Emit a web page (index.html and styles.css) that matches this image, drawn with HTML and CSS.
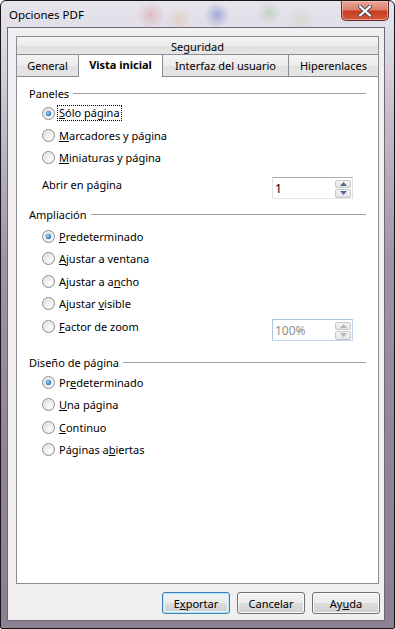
FILE: index.html
```html
<!DOCTYPE html>
<html lang="es">
<head>
    <meta charset="UTF-8">
    <title>Opciones PDF</title>
    <link rel="stylesheet" href="styles.css">
</head>
<body>
    <div class="window">
        <div class="titlebar">
            <span class="title">Opciones PDF</span>
            <div class="close-btn">
                <svg width="18" height="12" viewBox="0 0 18 12">
                    <path d="M4 1.5 L14 10.5 M14 1.5 L4 10.5" stroke="#4a4a55" stroke-width="4" stroke-linecap="round"/>
                    <path d="M4 1.5 L14 10.5 M14 1.5 L4 10.5" stroke="#ffffff" stroke-width="2.2" stroke-linecap="round"/>
                </svg>
            </div>
        </div>

        <div class="client">
            <div class="tabs">
                <div class="tab-row row-top">
                    <div class="tab tab-wide">Seguridad</div>
                </div>
                <div class="tab-row row-bottom">
                    <div class="tab tab-general">General</div>
                    <div class="tab tab-active">Vista inicial</div>
                    <div class="tab tab-interfaz">Interfaz del usuario</div>
                    <div class="tab tab-hiper">Hiperenlaces</div>
                </div>

                <div class="panel">
                    <!-- Paneles -->
                    <div class="group-title"><span>Paneles</span></div>
                    <div class="radio-row">
                        <span class="radio on"><span class="dot"></span></span>
                        <span class="label focus"><u>S</u>ólo página</span>
                    </div>
                    <div class="radio-row">
                        <span class="radio"></span>
                        <span class="label"><u>M</u>arcadores y página</span>
                    </div>
                    <div class="radio-row">
                        <span class="radio"></span>
                        <span class="label"><u>M</u>iniaturas y página</span>
                    </div>
                    <div class="spin-row">
                        <span class="spin-label">Abrir en página</span>
                        <div class="spinbox">
                            <span class="spin-value">1</span>
                            <div class="spin-buttons">
                                <span class="spin-btn"><svg width="7" height="4" viewBox="0 0 7 4"><path d="M0 4 L3.5 0 L7 4 Z" fill="#56689a"/></svg></span>
                                <span class="spin-btn"><svg width="7" height="4" viewBox="0 0 7 4"><path d="M0 0 L3.5 4 L7 0 Z" fill="#56689a"/></svg></span>
                            </div>
                        </div>
                    </div>

                    <!-- Ampliación -->
                    <div class="group-title gt-zoom"><span>Ampliación</span></div>
                    <div class="radio-list">
                        <div class="radio-row">
                            <span class="radio on"><span class="dot"></span></span>
                            <span class="label"><u>P</u>redeterminado</span>
                        </div>
                        <div class="radio-row">
                            <span class="radio"></span>
                            <span class="label"><u>A</u>justar a ventana</span>
                        </div>
                        <div class="radio-row">
                            <span class="radio"></span>
                            <span class="label">Ajustar a a<u>n</u>cho</span>
                        </div>
                        <div class="radio-row">
                            <span class="radio"></span>
                            <span class="label">Ajustar <u>v</u>isible</span>
                        </div>
                        <div class="factor-row">
                            <div class="radio-row">
                                <span class="radio"></span>
                                <span class="label"><u>F</u>actor de zoom</span>
                            </div>
                            <div class="spinbox disabled">
                                <span class="spin-value">100%</span>
                                <div class="spin-buttons">
                                    <span class="spin-btn"><svg width="7" height="4" viewBox="0 0 7 4"><path d="M0 4 L3.5 0 L7 4 Z" fill="#b5b5b5"/></svg></span>
                                    <span class="spin-btn"><svg width="7" height="4" viewBox="0 0 7 4"><path d="M0 0 L3.5 4 L7 0 Z" fill="#b5b5b5"/></svg></span>
                                </div>
                            </div>
                        </div>
                    </div>

                    <!-- Diseño de página -->
                    <div class="group-title gt-layout"><span>Diseño de página</span></div>
                    <div class="radio-row">
                        <span class="radio on"><span class="dot"></span></span>
                        <span class="label">Pr<u>e</u>determinado</span>
                    </div>
                    <div class="radio-row">
                        <span class="radio"></span>
                        <span class="label"><u>U</u>na página</span>
                    </div>
                    <div class="radio-row">
                        <span class="radio"></span>
                        <span class="label"><u>C</u>ontinuo</span>
                    </div>
                    <div class="radio-row">
                        <span class="radio"></span>
                        <span class="label">Páginas a<u>b</u>iertas</span>
                    </div>
                </div>
            </div>

            <div class="buttons">
                <div class="btn btn-default">E<u>x</u>portar</div>
                <div class="btn">Cancelar</div>
                <div class="btn">Ay<u>u</u>da</div>
            </div>
        </div>
    </div>
</body>
</html>
```

FILE: styles.css
```css
* {
    margin: 0;
    padding: 0;
    box-sizing: border-box;
}

body {
    background: #ffffff;
    font-family: 'Noto Sans', sans-serif;
    font-size: 11px;
    color: #000;
}

u {
    text-decoration: underline;
    text-underline-offset: 1px;
}

/* Ventana */
.window {
    width: 395px;
    height: 629px;
    border: 1px solid #161616;
    border-radius: 6px 6px 2px 2px;
    display: flex;
    flex-direction: column;
    background:
        radial-gradient(circle at 150px 14px, rgba(214, 120, 130, 0.35), transparent 14px),
        radial-gradient(circle at 178px 18px, rgba(220, 170, 120, 0.3), transparent 12px),
        radial-gradient(circle at 216px 14px, rgba(90, 110, 190, 0.45), transparent 13px),
        radial-gradient(circle at 268px 12px, rgba(120, 180, 110, 0.3), transparent 12px),
        radial-gradient(circle at 300px 18px, rgba(190, 190, 150, 0.25), transparent 14px),
        linear-gradient(to bottom, #e6e4ec 0, #dedbe4 40px, #c4bcc8 120px, #9f94a4 260px, #908496 450px, #8c8093 100%);
}

.titlebar {
    height: 26px;
    display: flex;
    justify-content: space-between;
    align-items: flex-start;
}

.title {
    align-self: center;
    padding-left: 8px;
    font-size: 11.5px;
    color: #000;
    margin-top: 1px;
}

.close-btn {
    width: 48px;
    height: 20px;
    margin-right: 5px;
    border: 1px solid #5e2c2a;
    border-top: none;
    border-radius: 0 0 5px 5px;
    background: linear-gradient(to bottom, #e9a99c 0%, #dd7f6c 45%, #c83d20 55%, #d2583a 100%);
    box-shadow: inset 0 0 0 1px rgba(255, 220, 210, 0.5);
    display: flex;
    align-items: center;
    justify-content: center;
}

.client {
    flex: 1;
    margin: 0 9px 7px 6px;
    border: 1px solid #6e6876;
    background: #f0f0f0;
    display: flex;
    flex-direction: column;
    padding: 8px 4px 6px 8px;
}

/* Pestañas */
.tabs {
    width: 363px;
    display: flex;
    flex-direction: column;
}

.tab-row {
    display: flex;
}

.row-top {
    height: 18px;
}

.row-bottom {
    height: 22px;
    align-items: flex-end;
}

.tab {
    border: 1px solid #898c95;
    border-bottom: none;
    background: linear-gradient(to bottom, #f4f4f4 0%, #ececec 50%, #e0e0e0 51%, #e5e5e5 100%);
    display: flex;
    align-items: center;
    justify-content: center;
    color: #000;
}

.tab-wide {
    width: 363px;
    height: 18px;
    padding-top: 1px;
}

.tab-general {
    width: 63px;
    height: 22px;
}

.tab-active {
    width: 85px;
    height: 23px;
    margin-left: -1px;
    margin-bottom: -1px;
    background: #ffffff;
    font-weight: bold;
    position: relative;
    z-index: 1;
    padding-bottom: 3px;
}

.tab-interfaz {
    width: 127px;
    height: 22px;
    margin-left: -1px;
}

.tab-hiper {
    width: 91px;
    height: 22px;
    margin-left: -1px;
}

.panel {
    height: 508px;
    border: 1px solid #898c95;
    background: #ffffff;
    padding: 7px 0 0 0;
}

/* Grupos */
.group-title {
    height: 18px;
    display: flex;
    align-items: center;
    padding: 0 12px;
}

.group-title::after {
    content: '';
    flex: 1;
    height: 1px;
    background: #a0a0a0;
    margin-left: 4px;
    margin-top: 1px;
}

.gt-zoom {
    margin-top: 6px;
}

.gt-layout {
    margin-top: 12px;
}

.radio-list {
    margin-top: 2px;
}

.radio-row {
    height: 22px;
    display: flex;
    align-items: center;
    padding-left: 25px;
}

.radio-list .radio-row,
.gt-layout ~ .radio-row {
    height: 22.5px;
}

.radio {
    width: 13px;
    height: 13px;
    border-radius: 50%;
    border: 1px solid #8a8a8a;
    background: radial-gradient(circle at 65% 65%, #ffffff 0%, #f0f0f0 35%, #cfcfcf 100%);
    box-shadow: inset 0 0 0 1px #f4f4f4;
    display: flex;
    align-items: center;
    justify-content: center;
    margin-right: 4px;
    flex: none;
}

.dot {
    width: 5px;
    height: 5px;
    border-radius: 50%;
    background: radial-gradient(circle at 40% 40%, #9fd4f4 0%, #2f80c4 60%, #16508a 100%);
    box-shadow: 0 0 1px #1c5a94;
}

.label.focus {
    outline: 1px dotted #000;
    outline-offset: 0;
    padding: 0 1px;
    margin-left: -1px;
    line-height: 14px;
}

/* Campos numéricos */
.spin-row {
    margin-top: 8px;
    display: flex;
    justify-content: space-between;
    align-items: flex-start;
    padding: 0 25px;
}

.spin-label {
    line-height: 18px;
}

.spinbox {
    width: 81px;
    height: 22px;
    margin-top: 1px;
    border: 1px solid #abadb3;
    border-color: #abadb3 #dbdfe6 #e3e9ef #e2e3ea;
    background: #fff;
    display: flex;
    align-items: center;
    justify-content: space-between;
    padding-left: 2px;
}

.spin-value {
    font-size: 12px;
}

.spinbox.disabled {
    border-color: #a9c4e4 #c4d6ec #c4d6ec #a9c4e4;
    margin-top: 4px;
}

.spinbox.disabled .spin-value {
    color: #8d8d8d;
}

.spin-buttons {
    width: 16px;
    height: 18px;
    margin: 1px 1px 0 0;
    display: flex;
    flex-direction: column;
    gap: 1px;
}

.spin-btn {
    flex: 1;
    border: 1px solid #c8c8c8;
    border-radius: 2px;
    background: linear-gradient(to bottom, #f6f6f6, #e4e4e4);
    display: flex;
    align-items: center;
    justify-content: center;
}

.factor-row {
    display: flex;
    justify-content: space-between;
    align-items: flex-start;
    padding-right: 25px;
}

/* Botones */
.buttons {
    margin-top: 8px;
    display: flex;
    justify-content: flex-end;
    gap: 7px;
}

.btn {
    width: 68px;
    height: 22px;
    border: 1px solid #707070;
    border-radius: 3px;
    background: linear-gradient(to bottom, #f2f2f2 0%, #ebebeb 50%, #dddddd 51%, #cfcfcf 100%);
    box-shadow: inset 0 0 0 1px #fbfbfb;
    display: flex;
    align-items: center;
    justify-content: center;
    font-size: 11px;
}

.btn-default {
    border-color: #3c7fb1;
    box-shadow: inset 0 0 0 1px #b8e4f8, inset 0 0 0 2px #e6f5fc;
}
```
